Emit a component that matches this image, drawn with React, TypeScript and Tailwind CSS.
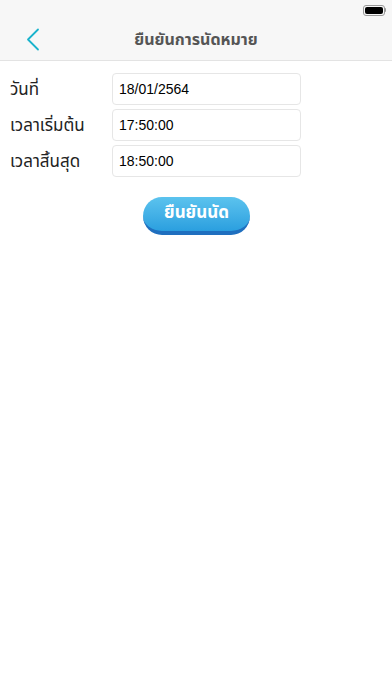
type FieldRowProps = {
  label: string;
  value: string;
};

function FieldRow({ label, value }: FieldRowProps) {
  return (
    <div className="flex items-center h-8">
      <span className="w-[102px] pt-1 text-[17px] text-[#222]">{label}</span>
      <div className="w-[189px] h-8 flex items-center px-[6px] rounded-[4px] border border-[#e6e6e6] bg-white text-[14px] text-black font-['Liberation_Sans',sans-serif]">
        {value}
      </div>
    </div>
  );
}

export default function App() {
  return (
    <div className="w-[392px] h-[696px] bg-white font-['Noto_Sans_Thai','Noto_Sans',sans-serif]">
      {/* Status bar + nav */}
      <div className="bg-[#f7f7f7] border-b border-[#e3e3e3]">
        <div className="h-5 flex justify-end items-center pr-[6px]">
          <div className="flex items-center">
            <div className="w-[22px] h-[11px] rounded-[3px] border border-[#999] p-[1px]">
              <div className="w-full h-full rounded-[2px] bg-black" />
            </div>
            <div className="w-[1.5px] h-[4px] bg-[#999] rounded-r-sm" />
          </div>
        </div>
        <div className="relative h-10 flex items-center justify-center">
          {/* back chevron */}
          <svg
            className="absolute left-[26px] top-[8px]"
            width="14"
            height="24"
            viewBox="0 0 14 24"
            fill="none"
          >
            <polyline
              points="12,1.5 2,11.5 12,21.5"
              stroke="#1ab3cc"
              strokeWidth="1.8"
              strokeLinecap="round"
              strokeLinejoin="round"
            />
          </svg>
          <span className="text-[16px] font-bold text-[#555]">ยืนยันการนัดหมาย</span>
        </div>
      </div>

      {/* Form */}
      <div className="pl-[10px] pt-3 flex flex-col gap-1">
        <FieldRow label="วันที่" value="18/01/2564" />
        <FieldRow label="เวลาเริ่มต้น" value="17:50:00" />
        <FieldRow label="เวลาสิ้นสุด" value="18:50:00" />
      </div>

      <div className="flex justify-center pt-5 pl-[1px]">
        <button className="w-[107px] h-[38px] rounded-full bg-gradient-to-b from-[#5bc3ee] to-[#2a9fdf] border-b-4 border-[#1f6fbf] text-white text-[17px] font-bold">
          ยืนยันนัด
        </button>
      </div>
    </div>
  );
}
